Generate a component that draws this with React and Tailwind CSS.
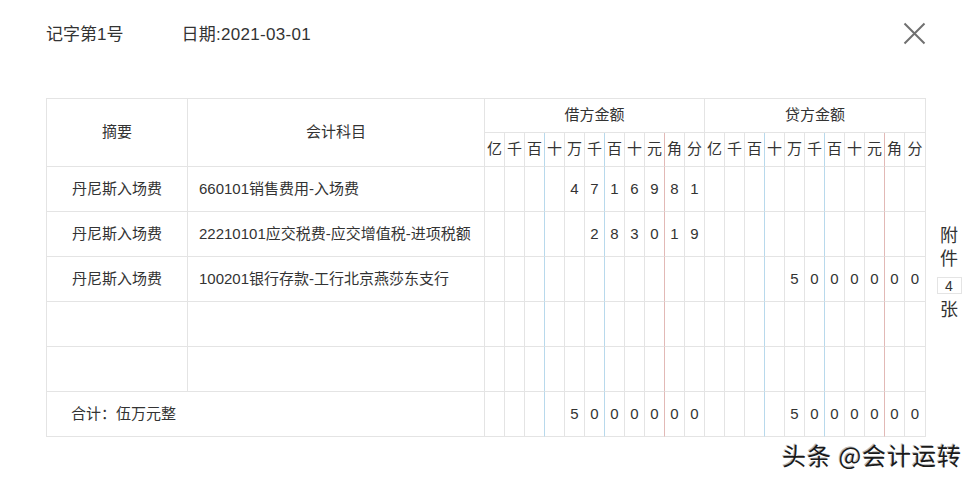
const FONT = "font-['Liberation_Sans','Noto_Sans_CJK_SC',sans-serif]";

const UNITS = ['亿', '千', '百', '十', '万', '千', '百', '十', '元', '角', '分'];

const ROWS = [
  { summary: '丹尼斯入场费', account: '660101销售费用-入场费', debit: '4716981', credit: '' },
  { summary: '丹尼斯入场费', account: '22210101应交税费-应交增值税-进项税额', debit: '283019', credit: '' },
  { summary: '丹尼斯入场费', account: '100201银行存款-工行北京燕莎东支行', debit: '', credit: '5000000' },
  { summary: '', account: '', debit: '', credit: '' },
  { summary: '', account: '', debit: '', credit: '' },
];

// colour of the right-hand line of digit column i (0..21)
const lineCls = (i) => {
  const k = i % 11;
  if (k === 2 || k === 5) return 'border-r-[#b8d9ec]';
  if (k === 8) return 'border-r-[#e2b9b6]';
  return 'border-r-[#e4e4e4]';
};

// spread an amount string into 11 digit slots, right aligned
const toSlots = (amount) => {
  const slots = Array(11).fill('');
  const chars = amount.split('');
  chars.forEach((c, idx) => {
    slots[11 - chars.length + idx] = c;
  });
  return slots;
};

function DigitCells({ debit, credit }) {
  const cells = [...toSlots(debit), ...toSlots(credit)];
  return cells.map((d, i) => (
    <div
      key={i}
      className={`flex items-center justify-center border-r border-b border-b-[#e4e4e4] text-[15px] text-[#333] ${lineCls(i)}`}
    >
      {d}
    </div>
  ));
}

function CloseIcon() {
  return (
    <svg width="23" height="23" viewBox="0 0 23 23" fill="none">
      <path d="M1.5 1.5 L21.5 21.5 M21.5 1.5 L1.5 21.5" stroke="#707070" strokeWidth="2" />
    </svg>
  );
}

export default function App() {
  return (
    <div className={`relative w-[975px] h-[483px] bg-white overflow-hidden ${FONT}`}>
      {/* Header */}
      <div className="flex items-center justify-between pt-[22px] pl-[46px] pr-[49px] h-[44px]">
        <div className="flex items-center text-[17px] text-[#333] pt-[3px]">
          <span>记字第1号</span>
          <span className="ml-[58px] tracking-[0.3px]">日期:2021-03-01</span>
        </div>
        <CloseIcon />
      </div>

      {/* Voucher table + attachments */}
      <div className="flex mt-[54px] pl-[46px]">
        <div className="grid grid-cols-[141px_297px_repeat(21,20px)_21px] grid-rows-[34px_34px_repeat(6,45px)] border-l border-t border-[#e4e4e4] text-[#333]">
          {/* header row 1 */}
          <div className="row-span-2 flex items-center justify-center border-r border-b border-[#e4e4e4] text-[15px]">摘要</div>
          <div className="row-span-2 flex items-center justify-center border-r border-b border-[#e4e4e4] text-[15px]">会计科目</div>
          <div className="col-span-11 flex items-center justify-center border-r border-b border-[#e4e4e4] text-[15px]">借方金额</div>
          <div className="col-span-11 flex items-center justify-center border-r border-b border-[#e4e4e4] text-[15px]">贷方金额</div>

          {/* header row 2: units */}
          {[...UNITS, ...UNITS].map((u, i) => (
            <div
              key={i}
              className={`flex items-center justify-center border-r border-b border-b-[#e4e4e4] text-[15px] ${lineCls(i)}`}
            >
              {u}
            </div>
          ))}

          {/* entries */}
          {ROWS.map((r, ri) => (
            <div key={ri} className="contents">
              <div className="flex items-center justify-center border-r border-b border-[#e4e4e4] text-[15px]">{r.summary}</div>
              <div className="flex items-center pl-[11px] border-r border-b border-[#e4e4e4] text-[15px] whitespace-nowrap">{r.account}</div>
              <DigitCells debit={r.debit} credit={r.credit} />
            </div>
          ))}

          {/* total */}
          <div className="col-span-2 flex items-center pl-[24px] border-r border-b border-[#e4e4e4] text-[15px]">合计：伍万元整</div>
          <DigitCells debit="5000000" credit="5000000" />
        </div>

        {/* attachments */}
        <div className="w-[46px] flex flex-col items-center pt-[127px] text-[#333]">
          <span className="text-[18px] leading-[23px]">附</span>
          <span className="text-[18px] leading-[23px]">件</span>
          <span className="mt-[6px] w-[25px] h-[17px] border border-[#e4e4e4] flex items-center justify-center text-[14px] leading-none">4</span>
          <span className="mt-[5px] text-[18px] leading-[23px]">张</span>
        </div>
      </div>

      {/* watermark */}
      <div className="absolute left-[782px] top-[437px] text-[24px] tracking-[1px] text-[#1a1a1a] [text-shadow:1px_1px_0_#fff,-1px_-1px_0_#bbb] whitespace-nowrap font-['Noto_Sans_CJK_SC',sans-serif]">
        头条 @会计运转
      </div>
    </div>
  );
}
